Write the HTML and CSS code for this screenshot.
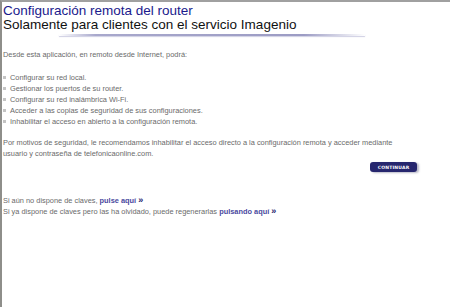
FILE: index.html
```html
<!DOCTYPE html>
<html lang="es">
<head>
    <meta charset="UTF-8">
    <title>Configuración remota del router</title>
    <link rel="stylesheet" href="styles.css">
</head>
<body>
    <div class="frame">
        <div class="header">
            <h1 class="header-title">Configuración remota del router</h1>
            <h2 class="header-subtitle">Solamente para clientes con el servicio Imagenio</h2>
            <div class="header-rule"></div>
        </div>

        <p class="intro">Desde esta aplicación, en remoto desde Internet, podrá:</p>

        <ul class="features">
            <li>Configurar su red local.</li>
            <li>Gestionar los puertos de su router.</li>
            <li>Configurar su red inalámbrica Wi-Fi.</li>
            <li>Acceder a las copias de seguridad de sus configuraciones.</li>
            <li>Inhabilitar el acceso en abierto a la configuración remota.</li>
        </ul>

        <p class="notice">Por motivos de seguridad, le recomendamos inhabilitar el acceso directo a la configuración remota y acceder mediante usuario y contraseña de telefonicaonline.com.</p>

        <div class="actions">
            <button class="button-continue">CONTINUAR</button>
        </div>

        <div class="help">
            <p>Si aún no dispone de claves, <a href="#" class="link">pulse aquí</a> <span class="arrow">»</span></p>
            <p>Si ya dispone de claves pero las ha olvidado, puede regenerarlas <a href="#" class="link">pulsando aquí</a> <span class="arrow">»</span></p>
        </div>
    </div>
</body>
</html>
```

FILE: styles.css
```css
/* Remote router configuration page */
:root {
    --clr-title: #1a1a8c;
    --clr-text: #6a6a6a;
    --clr-link: #4a4aa0;
    --clr-navy: #26266e;
    --clr-frame: #8e8e8a;
}

* {
    margin: 0;
    padding: 0;
    box-sizing: border-box;
}

html, body {
    height: 100%;
}

body {
    background: #ffffff;
    font-family: "Liberation Sans", Arial, sans-serif;
}

.frame {
    min-height: 100%;
    border-top: 2px solid #a0a0a0;
    border-left: 2px solid var(--clr-frame);
    padding: 2px 0 0 1px;
}

.header-title {
    font-size: 13.5px;
    font-weight: normal;
    line-height: 14px;
    color: var(--clr-title);
}

.header-subtitle {
    font-size: 13.5px;
    font-weight: normal;
    line-height: 14px;
    color: #111111;
}

.header-rule {
    width: 306px;
    height: 2px;
    margin: 2px 0 0 56px;
    background: linear-gradient(90deg, rgba(170, 170, 205, 0) 0%, #a8a8cc 12%, #9c9cc4 80%, rgba(170, 170, 205, 0) 100%);
    box-shadow: 0 1px 1px rgba(160, 160, 200, 0.5);
}

.intro,
.features,
.notice,
.help {
    font-size: 7.4px;
    line-height: 11px;
    color: var(--clr-text);
}

.intro {
    margin-top: 13px;
}

.features {
    list-style: none;
    margin-top: 12px;
}

.features li {
    display: flex;
    align-items: center;
    gap: 4px;
}

.features li::before {
    content: "";
    width: 3px;
    height: 3px;
    background: #c4c4c4;
}

.notice {
    margin-top: 10px;
    width: 402px;
}

.actions {
    display: flex;
    justify-content: flex-end;
    padding-right: 33px;
    margin-top: 3px;
}

.button-continue {
    width: 47px;
    height: 10px;
    border: none;
    border-radius: 3px;
    background: var(--clr-navy);
    color: #ffffff;
    font-family: "DejaVu Sans", sans-serif;
    font-size: 4.5px;
    font-weight: bold;
    letter-spacing: 0.2px;
    box-shadow: 2px 1px 2px rgba(100, 100, 130, 0.45);
}

.help {
    margin-top: 23px;
    line-height: 10px;
}

.link {
    color: var(--clr-link);
    font-weight: bold;
    text-decoration: none;
}

.arrow {
    color: var(--clr-navy);
    font-weight: bold;
    font-size: 9px;
}
```
